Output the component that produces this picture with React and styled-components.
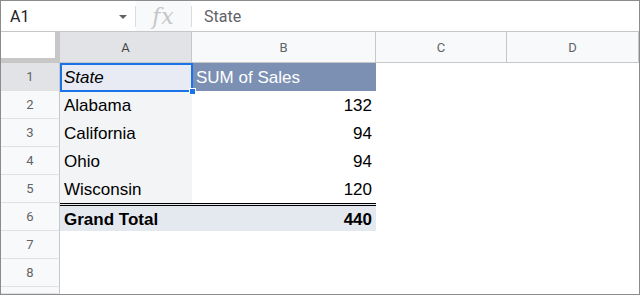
import React from "react";
import styled, { createGlobalStyle } from "styled-components";

const GlobalStyle = createGlobalStyle`
  html, body {
    margin: 0;
    padding: 0;
    background: #ffffff;
  }
  * {
    box-sizing: border-box;
  }
`;

export const Frame = styled.div`
  width: 640px;
  height: 295px;
  border: 1px solid #8c8c8c;
  overflow: hidden;
  background: #ffffff;
  font-family: Roboto, "Liberation Sans", Arial, sans-serif;
`;

export const FormulaBar = styled.div`
  height: 31px;
  display: flex;
  align-items: center;
  border-bottom: 1px solid #c7c7c7;
`;

export const NameBox = styled.div`
  width: 134px;
  height: 100%;
  display: flex;
  align-items: center;
  justify-content: space-between;
  padding: 0 8px 0 9px;
  font-size: 16px;
  color: #202124;
`;

export const Caret = styled.span`
  width: 0;
  height: 0;
  border-left: 4px solid transparent;
  border-right: 4px solid transparent;
  border-top: 4px solid #5f6368;
  margin-top: 1px;
`;

export const Divider = styled.div`
  width: 1px;
  height: 21px;
  background: #dadce0;
`;

export const FxBox = styled.div`
  width: 55px;
  height: 100%;
  display: flex;
  align-items: center;
  justify-content: center;
  background: #f8f9fa;
  color: #c4c7c5;
  font-family: "DejaVu Serif", "Liberation Serif", serif;
  font-style: italic;
  font-size: 22px;
  letter-spacing: 1px;
`;

export const FormulaText = styled.div`
  padding-left: 12px;
  font-size: 16px;
  color: #5f6368;
`;

export const Grid = styled.div`
  position: relative;
  display: grid;
  grid-template-columns: 59px 132px 184px 131px 1fr;
  grid-template-rows: 31px repeat(8, 28px) 1fr;
  height: 262px;
`;

export const Corner = styled.div`
  background: #ffffff;
  border-right: 5px solid #c7c7c7;
  border-bottom: 5px solid #c7c7c7;
`;

export const ColHead = styled.div`
  display: flex;
  align-items: center;
  justify-content: center;
  font-size: 13px;
  color: ${(p) => (p.$active ? "#444746" : "#5f6368")};
  background: ${(p) => (p.$active ? "#e1e3e6" : "#f8f9fa")};
  border-right: 1px solid #c7c7c7;
  border-bottom: 1px solid #c7c7c7;
`;

export const RowHead = styled.div`
  display: flex;
  align-items: center;
  justify-content: center;
  font-size: 13px;
  color: #5f6368;
  background: ${(p) => (p.$active ? "#e1e3e6" : "#f8f9fa")};
  border-right: 1px solid #c7c7c7;
  border-bottom: 1px solid #e1e1e1;
`;

export const Cell = styled.div`
  display: flex;
  align-items: center;
  justify-content: ${(p) => (p.$right ? "flex-end" : "flex-start")};
  padding: 2px 4px 0;
  font-family: "Liberation Sans", Arial, sans-serif;
  font-size: 17px;
  color: ${(p) => p.$color || "#000000"};
  font-weight: ${(p) => (p.$bold ? 700 : 400)};
  font-style: ${(p) => (p.$italic ? "italic" : "normal")};
  background: ${(p) => p.$bg || "#ffffff"};
  border-top: ${(p) => (p.$double ? "3px double #000000" : "none")};
  white-space: nowrap;
  overflow: hidden;
`;

export const Selection = styled.div`
  position: absolute;
  left: 59px;
  top: 31px;
  width: 133px;
  height: 29px;
  border: 2px solid #1a73e8;
  pointer-events: none;
`;

export const Handle = styled.div`
  position: absolute;
  right: -5px;
  bottom: -5px;
  width: 7px;
  height: 7px;
  background: #1a73e8;
  border: 1px solid #ffffff;
`;

const rows = [
  { name: "Alabama", value: 132 },
  { name: "California", value: 94 },
  { name: "Ohio", value: 94 },
  { name: "Wisconsin", value: 120 },
];

export default function App() {
  return (
    <>
      <GlobalStyle />
      <Frame>
        <FormulaBar>
          <NameBox>
            A1
            <Caret />
          </NameBox>
          <Divider />
          <FxBox>fx</FxBox>
          <Divider />
          <FormulaText>State</FormulaText>
        </FormulaBar>
        <Grid>
          <Corner />
          <ColHead $active>A</ColHead>
          <ColHead>B</ColHead>
          <ColHead>C</ColHead>
          <ColHead>D</ColHead>

          <RowHead $active>1</RowHead>
          <Cell $italic $bg="#e8ebf3">State</Cell>
          <Cell $bg="#7b90b3" $color="#ffffff">
            SUM of Sales
          </Cell>
          <Cell />
          <Cell />

          {rows.map((r, i) => (
            <React.Fragment key={r.name}>
              <RowHead>{i + 2}</RowHead>
              <Cell $bg="#f3f4f6">{r.name}</Cell>
              <Cell $right>{r.value}</Cell>
              <Cell />
              <Cell />
            </React.Fragment>
          ))}

          <RowHead>6</RowHead>
          <Cell $bold $double $bg="#e4e8ef">
            Grand Total
          </Cell>
          <Cell $bold $double $right $bg="#e4e8ef">
            440
          </Cell>
          <Cell />
          <Cell />

          {[7, 8, ""].map((n) => (
            <React.Fragment key={"r" + n}>
              <RowHead>{n}</RowHead>
              <Cell />
              <Cell />
              <Cell />
              <Cell />
            </React.Fragment>
          ))}

          <Selection>
            <Handle />
          </Selection>
        </Grid>
      </Frame>
    </>
  );
}
